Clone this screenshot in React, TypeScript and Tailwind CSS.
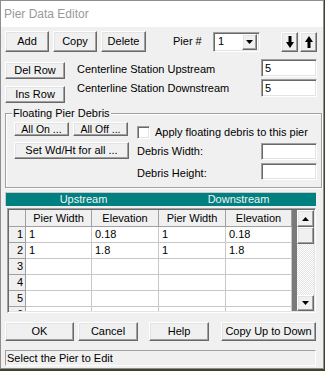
import React from "react";

const raised =
  "bg-[#f0f0f0] border border-t-white border-l-white border-r-[#696969] border-b-[#696969] shadow-[inset_-1px_-1px_0_#a0a0a0,inset_1px_1px_0_#e3e3e3]";
const sunken =
  "bg-white border border-t-[#a0a0a0] border-l-[#a0a0a0] border-r-white border-b-white shadow-[inset_1px_1px_0_#696969,inset_-1px_-1px_0_#e3e3e3]";

function Btn({ children, className }: { children?: React.ReactNode; className: string }) {
  return (
    <div className={`flex items-center justify-center shrink-0 whitespace-nowrap ${raised} ${className}`}>{children}</div>
  );
}

function Tri({ up }: { up?: boolean }) {
  return (
    <svg width="7" height="4" viewBox="0 0 7 4">
      {up ? <path d="M3.5 0L7 4H0z" fill="#000" /> : <path d="M0 0h7L3.5 4z" fill="#000" />}
    </svg>
  );
}

function Arrow({ up }: { up?: boolean }) {
  return (
    <svg width="8" height="12" viewBox="0 0 8 12" style={{ transform: up ? "rotate(180deg)" : undefined }}>
      <path d="M2.5 0h3v6H8L4 12L0 6h2.5z" fill="#000" />
    </svg>
  );
}

const rows = [
  ["1", "0.18", "1", "0.18"],
  ["1", "1.8", "1", "1.8"],
  ["", "", "", ""],
  ["", "", "", ""],
  ["", "", "", ""],
  ["", "", "", ""],
];

export default function App() {
  return (
    <div className="w-[325px] h-[371px] bg-[#45412f] font-['Liberation_Sans',Arial,sans-serif] text-[11px] text-black leading-[13px]">
      <div className="w-[324px] h-[369px] border border-[#8e8e8e] bg-[#f0f0f0] flex flex-col">
        {/* title */}
        <div className="h-[26px] bg-white flex items-center pl-[3px] text-[12px] text-[#999999]">
          Pier Data Editor
        </div>
        <div className="pl-[4px] flex flex-col">
          {/* row 1 */}
          <div className="mt-[4px] flex items-center h-[21px]">
            <Btn className="w-[44px] h-[21px]">Add</Btn>
            <Btn className="ml-[4px] w-[44px] h-[21px]">Copy</Btn>
            <Btn className="ml-[4px] w-[45px] h-[21px]">Delete</Btn>
            <span className="ml-[27px] w-[40px]">Pier #</span>
            <div className={`w-[47px] h-[20px] flex items-center p-[2px] ${sunken}`}>
              <span className="flex-1 pl-[2px]">1</span>
              <Btn className="w-[15px] h-[16px]">
                <Tri />
              </Btn>
            </div>
            <Btn className="ml-[21px] w-[17px] h-[20px]">
              <Arrow />
            </Btn>
            <Btn className="ml-[2px] w-[17px] h-[20px]">
              <Arrow up />
            </Btn>
          </div>
          {/* row 2 */}
          <div className="mt-[7px] flex">
            <div className="w-[60px] pt-[3px] flex flex-col">
              <Btn className="w-[60px] h-[17px]">Del Row</Btn>
              <Btn className="mt-[7px] w-[60px] h-[17px]">Ins Row</Btn>
            </div>
            <div className="ml-[12px] w-[184px] flex flex-col gap-[2px]">
              <div className="h-[18px] flex items-center pt-[2px]">Centerline Station Upstream</div>
              <div className="h-[18px] flex items-center pt-[1px]">Centerline Station Downstream</div>
            </div>
            <div className="flex flex-col gap-[2px]">
              <div className={`w-[56px] h-[18px] flex items-center pl-[3px] ${sunken}`}>5</div>
              <div className={`w-[56px] h-[18px] flex items-center pl-[3px] ${sunken}`}>5</div>
            </div>
          </div>
          {/* group box */}
          <div className="relative mt-[10px] w-[317px] h-[75px] border border-[#a0a0a0] shadow-[inset_1px_1px_0_#fff,1px_1px_0_#fff] flex pt-[8px] pl-[8px]">
            <span className="absolute left-[6px] top-[-7px] px-[1px] bg-[#f0f0f0]">Floating Pier Debris</span>
            <div className="w-[115px] flex flex-col">
              <div className="flex">
                <Btn className="w-[55px] h-[14px] text-[10.5px]">All On ...</Btn>
                <Btn className="ml-[4px] w-[55px] h-[14px] text-[10.5px]">All Off ...</Btn>
              </div>
              <Btn className="mt-[6px] w-[115px] h-[17px]">Set Wd/Ht for all ...</Btn>
            </div>
            <div className="ml-[8px] w-[180px] flex flex-col">
              <div className="mt-[4px] h-[13px] flex items-center">
                <div className={`w-[13px] h-[13px] ${sunken}`} />
                <span className="ml-[5px]">Apply floating debris to this pier</span>
              </div>
              <div className="mt-[4px] h-[17px] flex items-center justify-between">
                <span>Debris Width:</span>
                <div className={`w-[56px] h-[17px] ${sunken}`} />
              </div>
              <div className="mt-[3px] h-[17px] flex items-center justify-between">
                <span className="pt-[3px]">Debris Height:</span>
                <div className={`w-[56px] h-[17px] ${sunken}`} />
              </div>
            </div>
          </div>
          {/* teal header */}
          <div className="mt-[4px] w-[311px] h-[14px] bg-[#008080] border-t border-l border-[#c8c8c8] flex text-[#f4f4f4]">
            <div className="w-[155px] flex items-center justify-center">Upstream</div>
            <div className="flex-1 flex items-center justify-center">Downstream</div>
          </div>
          {/* grid */}
          <div className={`mt-[2px] ml-[2px] w-[309px] h-[105px] p-[1px] flex ${sunken}`}>
            <div className="w-[283px] h-full overflow-hidden bg-white">
              <div className="grid grid-cols-[17px_66px_67px_67px_66px] h-[17px]">
                <div className="bg-[#f0f0f0] border-r border-b border-[#a0a0a0]" />
                {["Pier Width", "Elevation", "Pier Width", "Elevation"].map((h, i) => (
                  <div key={i} className="bg-[#f0f0f0] border-r border-b border-[#a0a0a0] flex items-center justify-center">
                    {h}
                  </div>
                ))}
              </div>
              {rows.map((r, i) => (
                <div key={i} className="grid grid-cols-[17px_66px_67px_67px_66px] h-[16px]">
                  <div className="bg-[#f0f0f0] border-r border-b border-[#a0a0a0] flex items-center justify-end pr-[2px]">
                    {i + 1}
                  </div>
                  {r.map((c, j) => (
                    <div key={j} className="border-r border-b border-[#c8c8c8] flex items-center pl-[3px]">
                      {c}
                    </div>
                  ))}
                </div>
              ))}
            </div>
            <div className="w-[5px] h-full bg-[#7a7a7a]" />
            <div className="w-[17px] h-full flex flex-col">
              <Btn className="w-[17px] h-[17px]">
                <Tri up />
              </Btn>
              <Btn className="w-[17px] h-[17px]" />
              <div className="flex-1 bg-[image:repeating-conic-gradient(#ffffff_0_25%,#e3e3e3_0_50%)] bg-[length:2px_2px]" />
              <Btn className="w-[17px] h-[16px]">
                <Tri />
              </Btn>
            </div>
          </div>
          {/* bottom buttons */}
          <div className="mt-[9px] flex h-[19px]">
            <Btn className="w-[69px] h-[19px]">OK</Btn>
            <Btn className="ml-[4px] w-[60px] h-[19px]">Cancel</Btn>
            <Btn className="ml-[11px] w-[60px] h-[19px]">Help</Btn>
            <Btn className="ml-[12px] w-[95px] h-[19px]">Copy Up to Down</Btn>
          </div>
          {/* status */}
          <div className="mt-[9px] w-[311px] h-[16px] border border-t-[#a0a0a0] border-l-[#a0a0a0] border-r-white border-b-white flex items-center pl-[1px]">
            Select the Pier to Edit
          </div>
        </div>
      </div>
    </div>
  );
}
